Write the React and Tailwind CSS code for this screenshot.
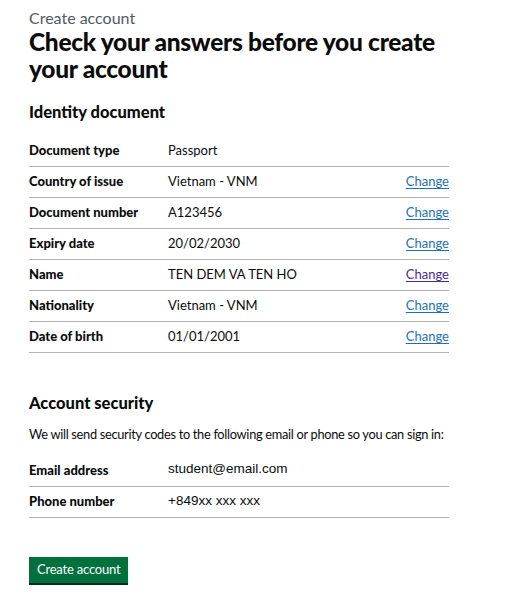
import React from 'react';

const identity = [
  { key: 'Document type', value: 'Passport', change: false },
  { key: 'Country of issue', value: 'Vietnam - VNM', change: true },
  { key: 'Document number', value: 'A123456', change: true },
  { key: 'Expiry date', value: '20/02/2030', change: true },
  { key: 'Name', value: 'TEN DEM VA TEN HO', change: true, visited: true },
  { key: 'Nationality', value: 'Vietnam - VNM', change: true },
  { key: 'Date of birth', value: '01/01/2001', change: true },
];

const Row = ({ label, children, action }) => (
  <div className="flex h-[31px] items-center border-b border-[#b1b4b6]">
    <dt className="w-[139px] shrink-0 text-[13px] font-black text-[#0b0c0c]">{label}</dt>
    <dd className="flex-1 text-[13px] text-[#0b0c0c]">{children}</dd>
    {action}
  </div>
);

const App = () => {
  return (
    <div className="min-h-screen bg-white font-['Lato','Noto_Sans',sans-serif] text-[#0b0c0c]">
      <div className="w-[449px] pl-[29px] pt-[8px]">
        <span className="block text-[16px] leading-[20px] text-[#505a5f]">Create account</span>
        <h1 className="text-[24.5px] font-black leading-[27px] tracking-[-0.3px]">
          Check your answers before you create your account
        </h1>

        <h2 className="mt-[19px] text-[16.5px] font-black leading-[22px]">Identity document</h2>
        <dl className="mt-[13px]">
          {identity.map((r) => (
            <Row
              key={r.key}
              label={r.key}
              action={
                r.change ? (
                  <a
                    href="#"
                    className={
                      'text-[13px] underline underline-offset-2 ' +
                      (r.visited ? 'text-[#4c2c92]' : 'text-[#1d70b8]')
                    }
                  >
                    Change
                  </a>
                ) : null
              }
            >
              {r.value}
            </Row>
          ))}
        </dl>

        <h2 className="mt-[39px] text-[16.5px] font-black leading-[22px]">Account security</h2>
        <p className="mt-[11px] whitespace-nowrap text-[12.8px] leading-[18px] tracking-[-0.3px]">
          We will send security codes to the following email or phone so you can sign in:
        </p>
        <dl className="mt-[13px]">
          <Row label="Email address">
            <span className="relative -top-[2px] font-['Liberation_Sans',Arial,sans-serif] text-[13.5px]">student@email.com</span>
          </Row>
          <Row label="Phone number">
            <span className="relative -top-[1px] font-['Liberation_Sans',Arial,sans-serif] text-[13.5px]">+849xx xxx xxx</span>
          </Row>
        </dl>

        <button className="mt-[39px] h-[26px] bg-[#00703c] px-[8px] text-[13px] tracking-[-0.2px] text-white shadow-[0_2px_0_#002d18]">
          Create account
        </button>
      </div>
    </div>
  );
};

export default App;
